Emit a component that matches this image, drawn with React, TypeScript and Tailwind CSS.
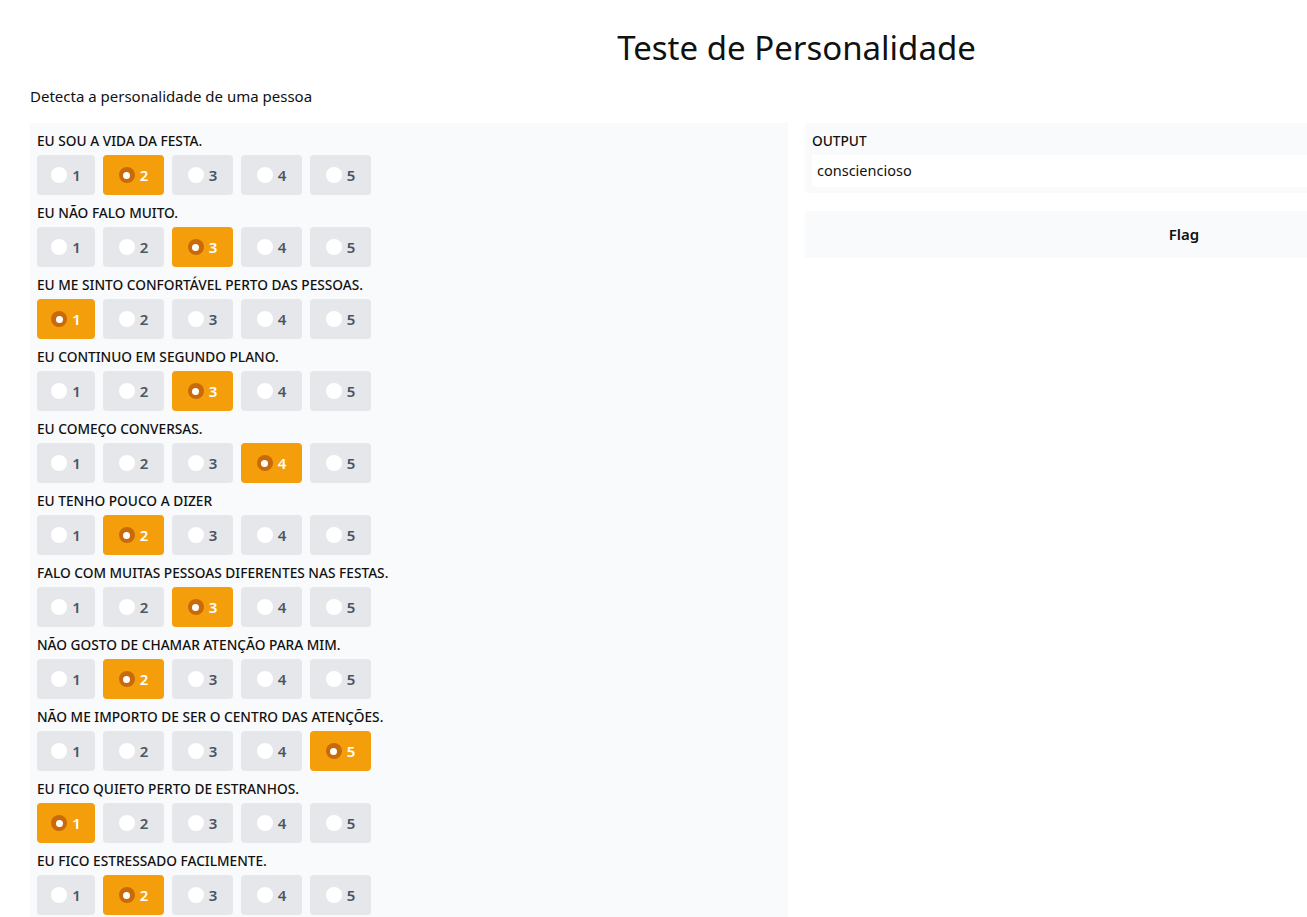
import React from "react";

const questions: [string, number][] = [
  ["EU SOU A VIDA DA FESTA.", 2],
  ["EU NÃO FALO MUITO.", 3],
  ["EU ME SINTO CONFORTÁVEL PERTO DAS PESSOAS.", 1],
  ["EU CONTINUO EM SEGUNDO PLANO.", 3],
  ["EU COMEÇO CONVERSAS.", 4],
  ["EU TENHO POUCO A DIZER", 2],
  ["FALO COM MUITAS PESSOAS DIFERENTES NAS FESTAS.", 3],
  ["NÃO GOSTO DE CHAMAR ATENÇÃO PARA MIM.", 2],
  ["NÃO ME IMPORTO DE SER O CENTRO DAS ATENÇÕES.", 5],
  ["EU FICO QUIETO PERTO DE ESTRANHOS.", 1],
  ["EU FICO ESTRESSADO FACILMENTE.", 2],
];

function Option({ n, selected }: { n: number; selected: boolean }) {
  const width = n === 1 ? "w-[58px]" : "w-[61px]";
  return (
    <div
      className={
        (selected
          ? "flex h-[40px] items-center justify-center gap-[5px] rounded-[4px] bg-[#f59e0b] "
          : "flex h-[40px] items-center justify-center gap-[5px] rounded-[4px] bg-[#e5e7eb] ") + width
      }
    >
      {selected ? (
        <span className="flex h-[16px] w-[16px] items-center justify-center rounded-full bg-[#c86a09]">
          <span className="h-[7px] w-[7px] rounded-full bg-white" />
        </span>
      ) : (
        <span className="h-[16px] w-[16px] rounded-full bg-white" />
      )}
      <span
        className={
          selected
            ? "text-[15px] font-semibold leading-none text-white"
            : "text-[15px] font-semibold leading-none text-[#4b5563]"
        }
      >
        {n}
      </span>
    </div>
  );
}

export default function App() {
  return (
    <div
      className="h-[917px] w-[1307px] overflow-hidden bg-white text-[#111827]"
      style={{ fontFamily: '"Noto Sans", "Open Sans", sans-serif' }}
    >
      <div className="w-[1593px] px-[30px]">
        <h1 className="pt-[26px] text-center text-[33px] font-normal leading-[44px] text-[#111]">
          Teste de Personalidade
        </h1>
        <p className="mt-[16px] text-[15px] leading-[20px] text-[#111]">
          Detecta a personalidade de uma pessoa
        </p>
        <div className="mt-[17px] flex gap-[17px]">
          <div className="flex w-[758px] flex-col bg-[#f9fafb] px-[7px] pt-[9px]">
            {questions.map(([q, sel], i) => (
              <div key={i} className="mb-[9px]">
                <div className="text-[13.7px] font-medium leading-[18px] text-[#111]">{q}</div>
                <div className="mt-[5px] flex gap-[8px]">
                  {[1, 2, 3, 4, 5].map((n) => (
                    <Option key={n} n={n} selected={n === sel} />
                  ))}
                </div>
              </div>
            ))}
          </div>
          <div className="flex w-[758px] flex-col gap-[18px] self-start">
            <div className="bg-[#f9fafb] px-[7px] pt-[9px] pb-[6px]">
              <div className="text-[13.7px] font-medium leading-[18px] text-[#111]">OUTPUT</div>
              <div className="mt-[5px] flex h-[32px] items-center bg-white px-[5px] text-[14.5px] text-[#111]">
                consciencioso
              </div>
            </div>
            <div className="flex h-[47px] items-center justify-center bg-[#f9fafb] text-[15px] font-semibold text-[#111]">
              Flag
            </div>
          </div>
        </div>
      </div>
    </div>
  );
}
